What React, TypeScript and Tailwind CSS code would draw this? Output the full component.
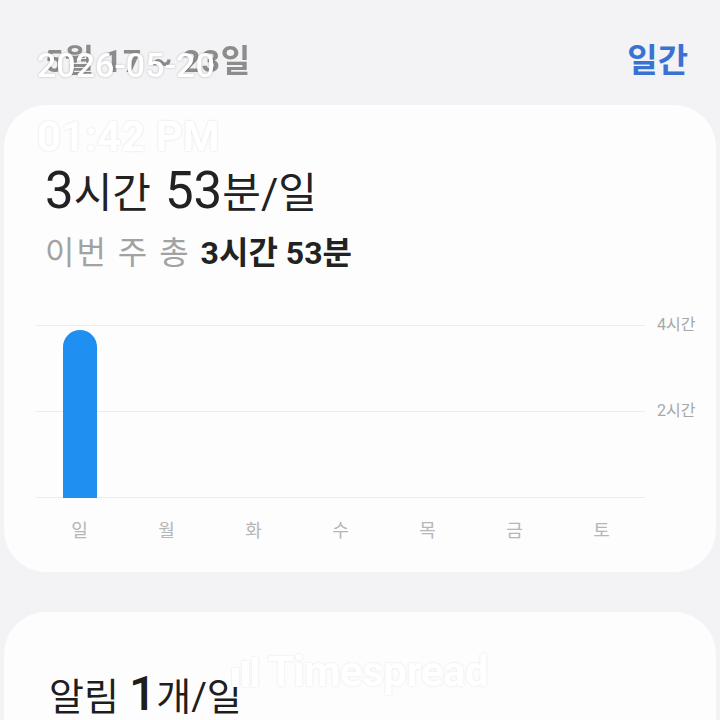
import React from "react";

const days = ["일", "월", "화", "수", "목", "금", "토"];
const minutes = [233, 0, 0, 0, 0, 0, 0];
const maxMinutes = 240;

const font = { fontFamily: "Roboto, 'Noto Sans CJK KR', sans-serif" };

export default function App() {
  return (
    <div
      className="relative w-[720px] h-[720px] overflow-hidden bg-[#f3f3f5] text-[#1e1e1e]"
      style={font}>
      {/* HEADER */}
      <header className="flex items-center justify-between h-[105px] pl-[45px] pr-[32px] pt-[16px]">
        <div className="text-[32px] font-bold text-[#8c8c8c] blur-[0.6px] tracking-[1px]">
          5월 17 ~ 23일
        </div>
        <div className="text-[33px] font-bold text-[#3a72d4]">일간</div>
      </header>

      {/* USAGE CARD */}
      <section className="mx-[4px] h-[467px] rounded-[42px] bg-[#fdfdfd] pt-[48px]">
        <div className="pl-[41px]">
          <h1 className="flex items-baseline h-[56px] text-[42px] text-[#222]">
            <span className="text-[51px]">3</span>
            <span>시간</span>
            <span className="ml-[14px] text-[51px]">53</span>
            <span>분/일</span>
          </h1>
          <p className="mt-[20px] h-[40px] text-[32px] text-[#a2a2a2] tracking-[2px]">
            이번 주 총{" "}
            <span className="font-bold text-[#222] tracking-normal">3시간 53분</span>
          </p>
        </div>

        {/* CHART */}
        <div className="mt-[56px] flex pl-[32px]">
          <div className="w-[609px]">
            <div className="relative h-[173px]">
              <div className="absolute inset-0 flex flex-col justify-between">
                <div className="h-px bg-[#ededed]" />
                <div className="h-px bg-[#ededed]" />
                <div className="h-px bg-[#ededed]" />
              </div>
              <div className="relative grid grid-cols-7 h-full items-end">
                {minutes.map((m, i) => (
                  <div key={i} className="flex justify-center">
                    {m > 0 && (
                      <div
                        className="w-[34px] rounded-t-full bg-[#1f8ff1]"
                        style={{ height: `${(m / maxMinutes) * 173}px` }}
                      />
                    )}
                  </div>
                ))}
              </div>
            </div>
            <div className="grid grid-cols-7 mt-[19px]">
              {days.map((d) => (
                <div key={d} className="text-center text-[18px] text-[#b6b6b6]">
                  {d}
                </div>
              ))}
            </div>
          </div>
          <div className="relative w-[70px] h-[173px] text-[16px] text-[#a8a8a8]">
            <span className="absolute left-[12px] top-[-12px]">4시간</span>
            <span className="absolute left-[12px] top-[74px]">2시간</span>
          </div>
        </div>
      </section>

      {/* NOTIFICATION CARD */}
      <section className="mx-[4px] mt-[40px] h-[200px] rounded-[42px] bg-[#fdfdfd] pt-[46px] pl-[45px]">
        <div className="flex items-baseline text-[38px] text-[#1e1e1e]">
          <span>알림</span>
          <span className="ml-[10px] text-[48px] font-medium">1</span>
          <span>개/일</span>
        </div>
      </section>

      {/* WATERMARKS */}
      <div className="absolute left-[37px] top-[40px] text-[34px] font-medium text-white drop-shadow-[0_0_1px_rgba(0,0,0,0.25)]">
        2026-05-20
      </div>
      <div className="absolute left-[37px] top-[105px] text-[42px] font-bold text-white drop-shadow-[0_0_1px_rgba(0,0,0,0.12)]">
        01:42 PM
      </div>
      <div className="absolute left-[232px] top-[640px] flex items-center gap-[10px] text-white drop-shadow-[0_0_1px_rgba(0,0,0,0.1)]">
        <svg width="26" height="30" viewBox="0 0 26 30" fill="white">
          <rect x="0" y="11" width="7" height="19" />
          <rect x="10" y="4" width="7" height="26" />
          <rect x="20" y="0" width="6" height="30" />
        </svg>
        <span className="text-[42px] font-bold tracking-[-0.5px]">Timespread</span>
      </div>
    </div>
  );
}
